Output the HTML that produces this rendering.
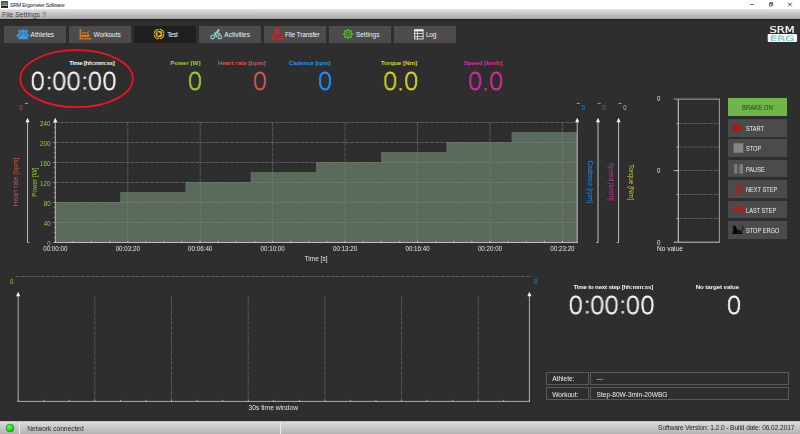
<!DOCTYPE html>
<html lang="en">
<head>
<meta charset="utf-8">
<title>SRM Ergometer Software</title>
<style>
*{box-sizing:border-box;margin:0;padding:0}
html,body{width:800px;height:434px;overflow:hidden;background:#2e2e2e}
body{position:relative;font-family:"Liberation Sans",sans-serif;color:#fff;font-size:6.5px;line-height:1}
.abs{position:absolute}
.t{position:absolute;white-space:nowrap;line-height:1}
.r{text-align:right}
.c{text-align:center}
.b{font-weight:bold}
#titlebar{left:0;top:0;width:800px;height:9px;background:#fff}
#menubar{left:0;top:8.9px;width:800px;height:11.6px;background:linear-gradient(#e6e6e6 0,#d2d2d2 22%,#bebebe 55%,#a9a9a9 89%,#1e1e1e 92%,#202020 100%)}
.tab{position:absolute;top:26px;width:62px;height:16.5px;background:#4c4c4c}
.tab.sel{background:#1f1f1f}
.tab span{position:absolute;top:5.6px;font-size:6.5px;color:#f2f2f2;white-space:nowrap}
.tab svg{position:absolute}
.lbl{font-size:6.2px;font-weight:bold}
.big{font-family:"DejaVu Sans Light","DejaVu Sans",sans-serif;font-weight:200;font-size:25px;transform-origin:100% 50%;transform:scaleX(.99);letter-spacing:-1.35px;-webkit-text-stroke:.8px;will-change:transform}
.big i{font-style:normal;position:relative;top:-1px;left:.6px}
.btn{position:absolute;left:728.2px;width:58.7px;height:17.7px;background:#4b4b4b}
.btn span{position:absolute;left:17.9px;top:7.2px;font-size:6.5px;color:#f0f0f0;white-space:nowrap;transform-origin:0 50%;transform:scaleX(.865)}
.btn svg{position:absolute}
#status{left:0;top:421px;width:800px;height:13px;background:linear-gradient(#a0a0a0 0,#e0e0e0 7%,#d3d3d3 22%,#c4c4c4 60%,#b7b7b7 94%,#a4a4a4 100%);color:#262626}
.box{position:absolute;border:1px solid #5a5a5a;height:12.7px}
.box span{position:absolute;left:5.6px;top:3.5px;font-size:6.6px;color:#eee;white-space:nowrap}
</style>
</head>
<body>
<!-- title bar -->
<div class="abs" id="titlebar">
  <svg class="abs" style="left:.9px;top:1.100px" width="7" height="7" viewBox="0 0 7 7"><rect x="0" y="0" width="7" height="6.800" fill="#4e4e4e"/><rect x=".7" y="1.700" width="5.600" height="1.100" fill="#8a8a8a"/><rect x=".5" y="3.800" width="6" height=".9" fill="#bfeeee"/><rect x="0" y="4.900" width="7" height="1.900" fill="#242424"/></svg>
  <div class="t" style="left:10px;top:2.5px;font-size:5.3px;color:#222;letter-spacing:-.27px">SRM Ergometer Software</div>
  <svg class="abs" style="left:745px;top:0" width="55" height="10" viewBox="0 0 55 10"><g stroke="#222" stroke-width=".6" fill="none"><path d="M5 4.5h4"/><rect x="24.3" y="3.3" width="2.6" height="2.6"/><path d="M25.1 3.3v-.8h2.6v2.6h-.8"/><path d="M43.1 2.6l3.7 3.7M46.8 2.6l-3.7 3.7" stroke-width=".8"/></g></svg>
</div>
<div class="abs" id="menubar">
  <div class="t" style="left:2px;top:3.4px;font-size:6.8px;color:#484848;word-spacing:.5px">File Settings ?</div>
</div>

<!-- tabs -->
<div class="tab" style="left:4px"><svg style="left:11.500px;top:2.800px" width="14" height="11" viewBox="0 0 14 11"><g fill="#4497e2"><ellipse cx="3.900" cy="2.300" rx="1.500" ry="1.900"/><ellipse cx="10.300" cy="2.300" rx="1.500" ry="1.900"/><path d="M.4 7.700c0-1.900.9-2.800 2.500-3.200l.4-.8h1.200l.4.800 1 .3v2.900z"/><path d="M13.300 7.700c0-1.900-.9-2.800-2.500-3.200l-.4-.8H9.200l-.4.800-1 .3v2.900z"/></g><g fill="#4a4a4a"><ellipse cx="7.100" cy="2.500" rx="2.350" ry="2.750"/><path d="M1.800 10.500c0-3.200 1.300-4.600 3.500-5l1-.9h1.600l1 .9c2.200.4 3.500 1.800 3.500 5z"/></g><g fill="#4497e2"><ellipse cx="7.100" cy="2.500" rx="1.900" ry="2.300"/><path d="M2.300 10.200c0-2.800 1.100-3.900 3.100-4.300l.9-1.300h1.600l.9 1.300c2 .4 3.100 1.500 3.100 4.300z"/></g></svg><span style="left:26.600px">Athletes</span></div>
<div class="tab" style="left:69px"><svg style="left:10px;top:2.600px" width="13" height="11" viewBox="0 0 13 11"><g fill="none" stroke="#f0872a"><path d="M1.200.9v8.800h10.200" stroke-width="1.050"/><path d="M2.400 4.500l1.300-1 1.300.9 1.300-.9 1.300.9 1.300-1.300 1.200-.5" stroke-width="1"/></g><circle cx="1.200" cy=".9" r=".8" fill="#f0872a"/><circle cx="11.500" cy="9.700" r=".8" fill="#f0872a"/><path d="M2.400 8.100V6.300l1.300-.9 1.300.8 1.300-.8 1.300.8 1.300-1.100 1.200-.3v3.300z" fill="#f0872a"/><path d="M2.400 7.100h7.700" stroke="#4b4b4b" stroke-width=".4"/></svg><span style="left:24.400px">Workouts</span></div>
<div class="tab sel" style="left:134px"><svg style="left:18.600px;top:1.900px" width="12" height="12" viewBox="0 0 12 12"><circle cx="6" cy="6" r="4.800" fill="none" stroke="#f3bb0b" stroke-width="1.050" stroke-dasharray="6.400 1.140"/><circle cx="6" cy="6" r="3.350" fill="#f3bb0b"/><path d="M4.700 3.900l3.200 2.100-3.200 2.100z" fill="#1e1e1e" stroke="#1e1e1e" stroke-width=".5" stroke-linejoin="round"/></svg><span style="left:33.200px;letter-spacing:-.4px">Test</span></div>
<div class="tab" style="left:199px"><svg style="left:11px;top:2.700px" width="13" height="11" viewBox="0 0 13 11"><g fill="none" stroke="#8fd6d0"><circle cx="2.700" cy="8" r="1.800" stroke-width="1.150"/><circle cx="9.800" cy="8" r="1.800" stroke-width="1.150"/><path d="M6.200 7.700V6.200L4.500 4.900l2.600-2.100 1.100 1.900h1.600" stroke-width="1.500" stroke-linejoin="round" stroke-linecap="round"/></g><circle cx="8.300" cy="1.500" r="1.300" fill="#8fd6d0"/></svg><span style="left:25.300px">Activities</span></div>
<div class="tab" style="left:264px"><svg style="left:6.800px;top:2.200px" width="13" height="12" viewBox="0 0 13 12"><g fill="#e11b1d"><path d="M4.400.2h3.400v4.500h1.800L6.100 8.100 2.600 4.700h1.800z"/><path d="M.3 7h1.500v2.900h8.600V7h1.500v4.400H.3z"/></g></svg><span style="left:21px;letter-spacing:-.115px">File Transfer</span></div>
<div class="tab" style="left:329px"><svg style="left:12.600px;top:1.900px" width="12" height="12" viewBox="0 0 12 12"><polygon fill="#5db92f" points="6.00,0.40 7.42,2.58 9.96,2.04 9.42,4.58 11.60,6.00 9.42,7.42 9.96,9.96 7.42,9.42 6.00,11.60 4.58,9.42 2.04,9.96 2.58,7.42 0.40,6.00 2.58,4.58 2.04,2.04 4.58,2.58"/><circle cx="6" cy="6" r="2.550" fill="none" stroke="#2c5a1c" stroke-width=".85"/><rect x="5.250" y="4.900" width="1.500" height="2.200" rx=".4" fill="none" stroke="#1f4414" stroke-width=".7"/></svg><span style="left:26.900px">Settings</span></div>
<div class="tab" style="left:394px"><svg style="left:19.600px;top:2.500px" width="10" height="11" viewBox="0 0 10 11"><rect x=".2" y=".2" width="9.300" height="10.200" fill="#f4f4f4"/><g fill="#4b4b4b"><rect x="1.100" y="2.300" width="2" height="2"/><rect x="3.800" y="2.300" width="4.800" height="2"/><rect x="1.100" y="5" width="2" height="2"/><rect x="3.800" y="5" width="4.800" height="2"/><rect x="1.100" y="7.700" width="2" height="1.900"/><rect x="3.800" y="7.700" width="4.800" height="1.900"/></g></svg><span style="left:31.900px;letter-spacing:-.19px">Log</span></div>

<!-- logo -->
<svg class="abs" style="left:764px;top:23px;will-change:transform" width="36" height="22" viewBox="0 0 36 22" font-family="DejaVu Sans, Liberation Sans, sans-serif" font-weight="normal">
  <text x="5.400" y="9.700" font-size="8.700" fill="#f4f4f4" stroke="#f4f4f4" stroke-width=".2" textLength="25.400" lengthAdjust="spacingAndGlyphs">SRM</text>
  <rect x="3.700" y="11.100" width="29.400" height="7.800" rx="1.200" fill="#f6f6f6"/>
  <text x="6" y="18" font-size="7.400" fill="#7cc6c6" stroke="#7cc6c6" stroke-width=".2" textLength="24.200" lengthAdjust="spacingAndGlyphs">ERG</text>
</svg>

<!-- readouts -->
<div class="t lbl r" style="right:685.5px;top:60px;color:#f4f4f4;letter-spacing:-.3px">Time [hh:mm:ss]</div>
<div class="t big r" style="right:684.45px;top:69.3px;color:#f4f4f4">0<i>:</i>00<i>:</i>00</div>
<div class="t lbl r" style="right:599.5px;top:60px;color:#9acd32">Power [W]</div>
<div class="t big r" style="right:598.5px;top:69.3px;color:#9acd32">0</div>
<div class="t lbl r" style="right:534.5px;top:60px;color:#d9534f">Heart rate [bpm]</div>
<div class="t big r" style="right:533.5px;top:69.3px;color:#d9534f">0</div>
<div class="t lbl r" style="right:469.5px;top:60px;color:#1e90ff;letter-spacing:-.14px">Cadence [rpm]</div>
<div class="t big r" style="right:468.5px;top:69.3px;color:#1e90ff">0</div>
<div class="t lbl r" style="right:383px;top:60px;color:#d6d223">Torque [Nm]</div>
<div class="t big r" style="right:382.6px;top:69.3px;color:#d6d223">0.0</div>
<div class="t lbl r" style="right:297.5px;top:60px;color:#dc2aa2">Speed [km/h]</div>
<div class="t big r" style="right:297.1px;top:69.3px;color:#dc2aa2">0.0</div>

<!-- main svg overlay: charts, ellipse -->
<svg class="abs" style="left:0;top:0" width="800" height="434" viewBox="0 0 800 434" font-family="Liberation Sans, sans-serif">
  <ellipse cx="76.600" cy="78.700" rx="56.200" ry="28.500" fill="none" stroke="#f01420" stroke-width="1.800"/>
  <polygon points="55.3,242.5 55.3,202.5 120.54,202.5 120.54,192.5 185.78,192.5 185.78,182.5 251.01,182.5 251.01,172.5 316.25,172.5 316.25,162.5 381.49,162.5 381.49,152.5 446.73,152.5 446.73,142.5 511.96,142.5 511.96,132.5 577.2,132.5 577.2,242.5" fill="#5a6b5b"/>
  <polyline points="55.3,202.5 120.54,202.5 120.54,192.5 185.78,192.5 185.78,182.5 251.01,182.5 251.01,172.5 316.25,172.5 316.25,162.5 381.49,162.5 381.49,152.5 446.73,152.5 446.73,142.5 511.96,142.5 511.96,132.5 577.2,132.5" fill="none" stroke="#6f846f" stroke-width=".5"/>
  <line x1="55.3" x2="577.2" y1="222.5" y2="222.5" stroke="#848484" stroke-width=".5" stroke-dasharray="4 1"/>
  <line x1="55.3" x2="577.2" y1="202.5" y2="202.5" stroke="#848484" stroke-width=".5" stroke-dasharray="4 1"/>
  <line x1="55.3" x2="577.2" y1="182.5" y2="182.5" stroke="#848484" stroke-width=".5" stroke-dasharray="4 1"/>
  <line x1="55.3" x2="577.2" y1="162.5" y2="162.5" stroke="#848484" stroke-width=".5" stroke-dasharray="4 1"/>
  <line x1="55.3" x2="577.2" y1="142.5" y2="142.5" stroke="#848484" stroke-width=".5" stroke-dasharray="4 1"/>
  <line x1="55.3" x2="577.2" y1="122.5" y2="122.5" stroke="#848484" stroke-width=".5" stroke-dasharray="4 1"/>
  <line x1="127.75" x2="127.75" y1="122.5" y2="242.5" stroke="#848484" stroke-width=".5" stroke-dasharray="4 1"/>
  <line x1="200.2" x2="200.2" y1="122.5" y2="242.5" stroke="#848484" stroke-width=".5" stroke-dasharray="4 1"/>
  <line x1="272.65" x2="272.65" y1="122.5" y2="242.5" stroke="#848484" stroke-width=".5" stroke-dasharray="4 1"/>
  <line x1="345.1" x2="345.1" y1="122.5" y2="242.5" stroke="#848484" stroke-width=".5" stroke-dasharray="4 1"/>
  <line x1="417.55" x2="417.55" y1="122.5" y2="242.5" stroke="#848484" stroke-width=".5" stroke-dasharray="4 1"/>
  <line x1="490" x2="490" y1="122.5" y2="242.5" stroke="#848484" stroke-width=".5" stroke-dasharray="4 1"/>
  <line x1="562.45" x2="562.45" y1="122.5" y2="242.5" stroke="#848484" stroke-width=".5" stroke-dasharray="4 1"/>
  <line x1="27.55" x2="27.55" y1="120.8" y2="242.5" stroke="#bcbcbc" stroke-width="1"/><polygon points="27.55,117.8 25.45,122.3 29.65,122.3" fill="#f4f4f4"/><line x1="27.55" x2="29.35" y1="242.5" y2="242.5" stroke="#bcbcbc" stroke-width="1"/>
  <line x1="55.3" x2="55.3" y1="120.8" y2="242.5" stroke="#bcbcbc" stroke-width="1"/><polygon points="55.3,117.8 53.2,122.3 57.4,122.3" fill="#f4f4f4"/>
  <line x1="577.2" x2="577.2" y1="120.8" y2="242.5" stroke="#bcbcbc" stroke-width="1"/><polygon points="577.2,117.8 575.1,122.3 579.3,122.3" fill="#f4f4f4"/><line x1="577.2" x2="575.4" y1="242.5" y2="242.5" stroke="#bcbcbc" stroke-width="1"/>
  <line x1="598" x2="598" y1="120.8" y2="242.5" stroke="#bcbcbc" stroke-width="1"/><polygon points="598,117.8 595.9,122.3 600.1,122.3" fill="#f4f4f4"/><line x1="598" x2="596.2" y1="242.5" y2="242.5" stroke="#bcbcbc" stroke-width="1"/>
  <line x1="618.6" x2="618.6" y1="120.8" y2="242.5" stroke="#bcbcbc" stroke-width="1"/><polygon points="618.6,117.8 616.5,122.3 620.7,122.3" fill="#f4f4f4"/><line x1="618.6" x2="616.8" y1="242.5" y2="242.5" stroke="#bcbcbc" stroke-width="1"/>
  <line x1="54.8" x2="577.7" y1="242.5" y2="242.5" stroke="#bcbcbc" stroke-width="1"/>
  <line x1="52.7" x2="55.3" y1="242.5" y2="242.5" stroke="#bcbcbc" stroke-width=".6"/>
  <line x1="53.8" x2="55.3" y1="237.5" y2="237.5" stroke="#bcbcbc" stroke-width=".6"/>
  <line x1="53.8" x2="55.3" y1="232.5" y2="232.5" stroke="#bcbcbc" stroke-width=".6"/>
  <line x1="53.8" x2="55.3" y1="227.5" y2="227.5" stroke="#bcbcbc" stroke-width=".6"/>
  <line x1="52.7" x2="55.3" y1="222.5" y2="222.5" stroke="#bcbcbc" stroke-width=".6"/>
  <line x1="53.8" x2="55.3" y1="217.5" y2="217.5" stroke="#bcbcbc" stroke-width=".6"/>
  <line x1="53.8" x2="55.3" y1="212.5" y2="212.5" stroke="#bcbcbc" stroke-width=".6"/>
  <line x1="53.8" x2="55.3" y1="207.5" y2="207.5" stroke="#bcbcbc" stroke-width=".6"/>
  <line x1="52.7" x2="55.3" y1="202.5" y2="202.5" stroke="#bcbcbc" stroke-width=".6"/>
  <line x1="53.8" x2="55.3" y1="197.5" y2="197.5" stroke="#bcbcbc" stroke-width=".6"/>
  <line x1="53.8" x2="55.3" y1="192.5" y2="192.5" stroke="#bcbcbc" stroke-width=".6"/>
  <line x1="53.8" x2="55.3" y1="187.5" y2="187.5" stroke="#bcbcbc" stroke-width=".6"/>
  <line x1="52.7" x2="55.3" y1="182.5" y2="182.5" stroke="#bcbcbc" stroke-width=".6"/>
  <line x1="53.8" x2="55.3" y1="177.5" y2="177.5" stroke="#bcbcbc" stroke-width=".6"/>
  <line x1="53.8" x2="55.3" y1="172.5" y2="172.5" stroke="#bcbcbc" stroke-width=".6"/>
  <line x1="53.8" x2="55.3" y1="167.5" y2="167.5" stroke="#bcbcbc" stroke-width=".6"/>
  <line x1="52.7" x2="55.3" y1="162.5" y2="162.5" stroke="#bcbcbc" stroke-width=".6"/>
  <line x1="53.8" x2="55.3" y1="157.5" y2="157.5" stroke="#bcbcbc" stroke-width=".6"/>
  <line x1="53.8" x2="55.3" y1="152.5" y2="152.5" stroke="#bcbcbc" stroke-width=".6"/>
  <line x1="53.8" x2="55.3" y1="147.5" y2="147.5" stroke="#bcbcbc" stroke-width=".6"/>
  <line x1="52.7" x2="55.3" y1="142.5" y2="142.5" stroke="#bcbcbc" stroke-width=".6"/>
  <line x1="53.8" x2="55.3" y1="137.5" y2="137.5" stroke="#bcbcbc" stroke-width=".6"/>
  <line x1="53.8" x2="55.3" y1="132.5" y2="132.5" stroke="#bcbcbc" stroke-width=".6"/>
  <line x1="53.8" x2="55.3" y1="127.5" y2="127.5" stroke="#bcbcbc" stroke-width=".6"/>
  <line x1="52.7" x2="55.3" y1="122.5" y2="122.5" stroke="#bcbcbc" stroke-width=".6"/>
  <line x1="55.3" x2="55.3" y1="240.9" y2="242.5" stroke="#f0f0f0" stroke-width=".6"/>
  <line x1="73.41" x2="73.41" y1="240.9" y2="242.5" stroke="#f0f0f0" stroke-width=".6"/>
  <line x1="91.53" x2="91.53" y1="240.9" y2="242.5" stroke="#f0f0f0" stroke-width=".6"/>
  <line x1="109.64" x2="109.64" y1="240.9" y2="242.5" stroke="#f0f0f0" stroke-width=".6"/>
  <line x1="127.75" x2="127.75" y1="240.9" y2="242.5" stroke="#f0f0f0" stroke-width=".6"/>
  <line x1="145.86" x2="145.86" y1="240.9" y2="242.5" stroke="#f0f0f0" stroke-width=".6"/>
  <line x1="163.98" x2="163.98" y1="240.9" y2="242.5" stroke="#f0f0f0" stroke-width=".6"/>
  <line x1="182.09" x2="182.09" y1="240.9" y2="242.5" stroke="#f0f0f0" stroke-width=".6"/>
  <line x1="200.2" x2="200.2" y1="240.9" y2="242.5" stroke="#f0f0f0" stroke-width=".6"/>
  <line x1="218.31" x2="218.31" y1="240.9" y2="242.5" stroke="#f0f0f0" stroke-width=".6"/>
  <line x1="236.43" x2="236.43" y1="240.9" y2="242.5" stroke="#f0f0f0" stroke-width=".6"/>
  <line x1="254.54" x2="254.54" y1="240.9" y2="242.5" stroke="#f0f0f0" stroke-width=".6"/>
  <line x1="272.65" x2="272.65" y1="240.9" y2="242.5" stroke="#f0f0f0" stroke-width=".6"/>
  <line x1="290.76" x2="290.76" y1="240.9" y2="242.5" stroke="#f0f0f0" stroke-width=".6"/>
  <line x1="308.88" x2="308.88" y1="240.9" y2="242.5" stroke="#f0f0f0" stroke-width=".6"/>
  <line x1="326.99" x2="326.99" y1="240.9" y2="242.5" stroke="#f0f0f0" stroke-width=".6"/>
  <line x1="345.1" x2="345.1" y1="240.9" y2="242.5" stroke="#f0f0f0" stroke-width=".6"/>
  <line x1="363.21" x2="363.21" y1="240.9" y2="242.5" stroke="#f0f0f0" stroke-width=".6"/>
  <line x1="381.33" x2="381.33" y1="240.9" y2="242.5" stroke="#f0f0f0" stroke-width=".6"/>
  <line x1="399.44" x2="399.44" y1="240.9" y2="242.5" stroke="#f0f0f0" stroke-width=".6"/>
  <line x1="417.55" x2="417.55" y1="240.9" y2="242.5" stroke="#f0f0f0" stroke-width=".6"/>
  <line x1="435.66" x2="435.66" y1="240.9" y2="242.5" stroke="#f0f0f0" stroke-width=".6"/>
  <line x1="453.78" x2="453.78" y1="240.9" y2="242.5" stroke="#f0f0f0" stroke-width=".6"/>
  <line x1="471.89" x2="471.89" y1="240.9" y2="242.5" stroke="#f0f0f0" stroke-width=".6"/>
  <line x1="490" x2="490" y1="240.9" y2="242.5" stroke="#f0f0f0" stroke-width=".6"/>
  <line x1="508.11" x2="508.11" y1="240.9" y2="242.5" stroke="#f0f0f0" stroke-width=".6"/>
  <line x1="526.23" x2="526.23" y1="240.9" y2="242.5" stroke="#f0f0f0" stroke-width=".6"/>
  <line x1="544.34" x2="544.34" y1="240.9" y2="242.5" stroke="#f0f0f0" stroke-width=".6"/>
  <line x1="562.45" x2="562.45" y1="240.9" y2="242.5" stroke="#f0f0f0" stroke-width=".6"/>
  <text x="47.3" y="245.6" font-size="7" fill="#9acd32" textLength="3.3" lengthAdjust="spacingAndGlyphs">0</text>
  <text x="43.7" y="225.6" font-size="7" fill="#9acd32" textLength="6.9" lengthAdjust="spacingAndGlyphs">40</text>
  <text x="43.7" y="205.6" font-size="7" fill="#9acd32" textLength="6.9" lengthAdjust="spacingAndGlyphs">80</text>
  <text x="40.1" y="185.6" font-size="7" fill="#9acd32" textLength="10.5" lengthAdjust="spacingAndGlyphs">120</text>
  <text x="40.1" y="165.6" font-size="7" fill="#9acd32" textLength="10.5" lengthAdjust="spacingAndGlyphs">160</text>
  <text x="40.1" y="145.6" font-size="7" fill="#9acd32" textLength="10.5" lengthAdjust="spacingAndGlyphs">200</text>
  <text x="40.1" y="125.6" font-size="7" fill="#9acd32" textLength="10.5" lengthAdjust="spacingAndGlyphs">240</text>
  <text x="43.2" y="251" font-size="6.6" fill="#e4e4e4" textLength="24.2" lengthAdjust="spacingAndGlyphs">00:00:00</text>
  <text x="115.65" y="251" font-size="6.6" fill="#e4e4e4" textLength="24.2" lengthAdjust="spacingAndGlyphs">00:03:20</text>
  <text x="188.1" y="251" font-size="6.6" fill="#e4e4e4" textLength="24.2" lengthAdjust="spacingAndGlyphs">00:06:40</text>
  <text x="260.55" y="251" font-size="6.6" fill="#e4e4e4" textLength="24.2" lengthAdjust="spacingAndGlyphs">00:10:00</text>
  <text x="333" y="251" font-size="6.6" fill="#e4e4e4" textLength="24.2" lengthAdjust="spacingAndGlyphs">00:13:20</text>
  <text x="405.45" y="251" font-size="6.6" fill="#e4e4e4" textLength="24.2" lengthAdjust="spacingAndGlyphs">00:16:40</text>
  <text x="477.9" y="251" font-size="6.6" fill="#e4e4e4" textLength="24.2" lengthAdjust="spacingAndGlyphs">00:20:00</text>
  <text x="550.35" y="251" font-size="6.6" fill="#e4e4e4" textLength="24.2" lengthAdjust="spacingAndGlyphs">00:23:20</text>
  <text x="316" y="261.2" text-anchor="middle" font-size="6.5" fill="#e4e4e4">Time [s]</text>
  <text transform="translate(17.6,182.1) rotate(-90)" x="-24.15" font-size="6.6" fill="#c9504c" textLength="48.3" lengthAdjust="spacingAndGlyphs">Heart rate [bpm]</text>
  <text transform="translate(37,182.2) rotate(-90)" x="-14.6" font-size="6.6" fill="#9acd32" textLength="29.2" lengthAdjust="spacingAndGlyphs">Power [W]</text>
  <text transform="translate(587.6,181.8) rotate(90)" x="-21.2" font-size="6.6" fill="#1e90ff" textLength="42.4" lengthAdjust="spacingAndGlyphs">Cadence [rpm]</text>
  <text transform="translate(608.6,181.65) rotate(90)" x="-19.15" font-size="6.6" fill="#dc2aa2" textLength="38.3" lengthAdjust="spacingAndGlyphs">Speed [km/h]</text>
  <text transform="translate(629.3,182.15) rotate(90)" x="-18.15" font-size="6.6" fill="#d6d223" textLength="36.3" lengthAdjust="spacingAndGlyphs">Torque [Nm]</text>
  <text x="21.05" y="109.7" text-anchor="middle" font-size="6.7" fill="#c9504c" textLength="3.3" lengthAdjust="spacingAndGlyphs">0</text>
  <line x1="24.9" x2="27.9" y1="103.4" y2="103.4" stroke="#cfcfcf" stroke-width=".7"/>
  <text x="583.5" y="109.9" text-anchor="middle" font-size="6.7" fill="#1e90ff" textLength="3.3" lengthAdjust="spacingAndGlyphs">0</text>
  <line x1="576.8" x2="579.8" y1="103.4" y2="103.4" stroke="#cfcfcf" stroke-width=".7"/>
  <text x="604.2" y="109.9" text-anchor="middle" font-size="6.7" fill="#dc2aa2" textLength="3.3" lengthAdjust="spacingAndGlyphs">0</text>
  <line x1="597.7" x2="600.7" y1="103.4" y2="103.4" stroke="#cfcfcf" stroke-width=".7"/>
  <text x="624.8" y="109.9" text-anchor="middle" font-size="6.7" fill="#d6d223" textLength="3.3" lengthAdjust="spacingAndGlyphs">0</text>
  <line x1="618.3" x2="621.3" y1="103.4" y2="103.4" stroke="#cfcfcf" stroke-width=".7"/>
  <line x1="15.8" x2="531.8" y1="276.5" y2="276.5" stroke="#848484" stroke-width=".5" stroke-dasharray="4 1"/>
  <line x1="94.83" x2="94.83" y1="296.2" y2="401.4" stroke="#848484" stroke-width=".5" stroke-dasharray="4 1"/>
  <line x1="171.51" x2="171.51" y1="296.2" y2="401.4" stroke="#848484" stroke-width=".5" stroke-dasharray="4 1"/>
  <line x1="248.19" x2="248.19" y1="296.2" y2="401.4" stroke="#848484" stroke-width=".5" stroke-dasharray="4 1"/>
  <line x1="324.87" x2="324.87" y1="296.2" y2="401.4" stroke="#848484" stroke-width=".5" stroke-dasharray="4 1"/>
  <line x1="401.55" x2="401.55" y1="296.2" y2="401.4" stroke="#848484" stroke-width=".5" stroke-dasharray="4 1"/>
  <line x1="478.23" x2="478.23" y1="296.2" y2="401.4" stroke="#848484" stroke-width=".5" stroke-dasharray="4 1"/>
  <line x1="18.15" x2="18.15" y1="294.7" y2="401.4" stroke="#adadad" stroke-width="1"/><polygon points="18.15,291.7 16.05,296.2 20.25,296.2" fill="#f4f4f4"/>
  <line x1="529.4" x2="529.4" y1="294.7" y2="401.4" stroke="#adadad" stroke-width="1"/><polygon points="529.4,291.7 527.3,296.2 531.5,296.2" fill="#f4f4f4"/>
  <line x1="17.65" x2="529.9" y1="401.4" y2="401.4" stroke="#adadad" stroke-width="1"/>
  <line x1="18.15" x2="18.15" y1="399.8" y2="401.4" stroke="#f0f0f0" stroke-width=".6"/>
  <line x1="43.71" x2="43.71" y1="399.8" y2="401.4" stroke="#f0f0f0" stroke-width=".6"/>
  <line x1="69.27" x2="69.27" y1="399.8" y2="401.4" stroke="#f0f0f0" stroke-width=".6"/>
  <line x1="94.83" x2="94.83" y1="399.8" y2="401.4" stroke="#f0f0f0" stroke-width=".6"/>
  <line x1="120.39" x2="120.39" y1="399.8" y2="401.4" stroke="#f0f0f0" stroke-width=".6"/>
  <line x1="145.95" x2="145.95" y1="399.8" y2="401.4" stroke="#f0f0f0" stroke-width=".6"/>
  <line x1="171.51" x2="171.51" y1="399.8" y2="401.4" stroke="#f0f0f0" stroke-width=".6"/>
  <line x1="197.07" x2="197.07" y1="399.8" y2="401.4" stroke="#f0f0f0" stroke-width=".6"/>
  <line x1="222.63" x2="222.63" y1="399.8" y2="401.4" stroke="#f0f0f0" stroke-width=".6"/>
  <line x1="248.19" x2="248.19" y1="399.8" y2="401.4" stroke="#f0f0f0" stroke-width=".6"/>
  <line x1="273.75" x2="273.75" y1="399.8" y2="401.4" stroke="#f0f0f0" stroke-width=".6"/>
  <line x1="299.31" x2="299.31" y1="399.8" y2="401.4" stroke="#f0f0f0" stroke-width=".6"/>
  <line x1="324.87" x2="324.87" y1="399.8" y2="401.4" stroke="#f0f0f0" stroke-width=".6"/>
  <line x1="350.43" x2="350.43" y1="399.8" y2="401.4" stroke="#f0f0f0" stroke-width=".6"/>
  <line x1="375.99" x2="375.99" y1="399.8" y2="401.4" stroke="#f0f0f0" stroke-width=".6"/>
  <line x1="401.55" x2="401.55" y1="399.8" y2="401.4" stroke="#f0f0f0" stroke-width=".6"/>
  <line x1="427.11" x2="427.11" y1="399.8" y2="401.4" stroke="#f0f0f0" stroke-width=".6"/>
  <line x1="452.67" x2="452.67" y1="399.8" y2="401.4" stroke="#f0f0f0" stroke-width=".6"/>
  <line x1="478.23" x2="478.23" y1="399.8" y2="401.4" stroke="#f0f0f0" stroke-width=".6"/>
  <line x1="503.79" x2="503.79" y1="399.8" y2="401.4" stroke="#f0f0f0" stroke-width=".6"/>
  <line x1="529.35" x2="529.35" y1="399.8" y2="401.4" stroke="#f0f0f0" stroke-width=".6"/>
  <text x="11.6" y="283.5" text-anchor="middle" font-size="6.7" fill="#9acd32" textLength="3.3" lengthAdjust="spacingAndGlyphs">0</text>
  <text x="535.9" y="283.5" text-anchor="middle" font-size="6.7" fill="#1e90ff" textLength="3.3" lengthAdjust="spacingAndGlyphs">0</text>
  <text x="248.5" y="409.7" font-size="6.7" fill="#e4e4e4" textLength="49.6" lengthAdjust="spacingAndGlyphs">30s time window</text>
  <line x1="678.3" x2="719.4" y1="123.5" y2="123.5" stroke="#848484" stroke-width=".5" stroke-dasharray="4 1"/>
  <line x1="676.3" x2="678.3" y1="123.5" y2="123.5" stroke="#cfcfcf" stroke-width=".7"/>
  <line x1="678.3" x2="719.4" y1="147" y2="147" stroke="#848484" stroke-width=".5" stroke-dasharray="4 1"/>
  <line x1="676.3" x2="678.3" y1="147" y2="147" stroke="#cfcfcf" stroke-width=".7"/>
  <line x1="678.3" x2="719.4" y1="170.5" y2="170.5" stroke="#848484" stroke-width=".5" stroke-dasharray="4 1"/>
  <line x1="676.3" x2="678.3" y1="170.5" y2="170.5" stroke="#cfcfcf" stroke-width=".7"/>
  <line x1="678.3" x2="719.4" y1="194.5" y2="194.5" stroke="#848484" stroke-width=".5" stroke-dasharray="4 1"/>
  <line x1="676.3" x2="678.3" y1="194.5" y2="194.5" stroke="#cfcfcf" stroke-width=".7"/>
  <line x1="678.3" x2="719.4" y1="218.5" y2="218.5" stroke="#848484" stroke-width=".5" stroke-dasharray="4 1"/>
  <line x1="676.3" x2="678.3" y1="218.5" y2="218.5" stroke="#cfcfcf" stroke-width=".7"/>
  <line x1="673.7" x2="719.8" y1="99.2" y2="99.2" stroke="#8c8c8c" stroke-width="1.3"/>
  <line x1="673.7" x2="719.8" y1="242.2" y2="242.2" stroke="#c4c4c4" stroke-width="1"/>
  <line x1="678.3" x2="678.3" y1="99.2" y2="242.2" stroke="#c4c4c4" stroke-width="1.1"/>
  <line x1="719.4" x2="719.4" y1="99.2" y2="242.2" stroke="#bdbdbd" stroke-width=".8"/>
  <line x1="673.7" x2="678.3" y1="170.7" y2="170.7" stroke="#c4c4c4" stroke-width=".9"/>
  <text x="657.1" y="100.8" font-size="6.6" fill="#e4e4e4" textLength="3.4" lengthAdjust="spacingAndGlyphs">0</text>
  <text x="657.1" y="172.7" font-size="6.6" fill="#e4e4e4" textLength="3.4" lengthAdjust="spacingAndGlyphs">0</text>
  <text x="657.1" y="244.5" font-size="6.6" fill="#e4e4e4" textLength="3.4" lengthAdjust="spacingAndGlyphs">0</text>
  <text x="657" y="251" font-size="6.5" fill="#e4e4e4" textLength="25.8" lengthAdjust="spacingAndGlyphs">No value</text>
</svg>

<!-- buttons -->
<div class="btn" style="top:98.200px;background:#6fb548"><span style="left:0;top:6.5px;width:100%;text-align:center;color:#23401a;transform-origin:50% 50%;transform:scaleX(.92)">BRAKE ON</span></div>
<div class="btn" style="top:118.900px"><svg style="left:4.500px;top:3.800px" width="11" height="10" viewBox="0 0 11 10"><path d="M.5 0l9.900 4.800L.5 9.600z" fill="#c1100e"/></svg><span>START</span></div>
<div class="btn" style="top:139.200px"><svg style="left:4.500px;top:3.800px" width="11" height="10" viewBox="0 0 11 10"><rect x=".5" y=".3" width="9.800" height="9.400" fill="#868686"/></svg><span>STOP</span></div>
<div class="btn" style="top:159.800px"><svg style="left:4.500px;top:3.900px" width="11" height="10" viewBox="0 0 11 10"><rect x="1.100" y=".3" width="3.200" height="9.300" fill="#7c7c7c"/><rect x="6.300" y=".3" width="3.700" height="9.300" fill="#7c7c7c"/></svg><span>PAUSE</span></div>
<div class="btn" style="top:180.200px"><svg style="left:4.500px;top:3.500px" width="11" height="10" viewBox="0 0 11 10"><path d="M2 .4h2L7.700 5 4 9.700H2L5.200 5z" fill="#d0100f"/><rect x="7.900" y=".3" width="1.500" height="9.500" fill="#d0100f"/></svg><span>NEXT STEP</span></div>
<div class="btn" style="top:200.800px"><svg style="left:4.500px;top:4.500px" width="11" height="8" viewBox="0 0 11 8"><path d="M.6.400l3.800 3.500L.6 7.400zM4.400.4l3.800 3.500-3.800 3.500z" fill="#d0100f"/><rect x="8.300" y=".2" width="1.700" height="7.400" fill="#d0100f"/></svg><span>LAST STEP</span></div>
<div class="btn" style="top:221.100px"><svg style="left:3.800px;top:3.800px" width="13" height="10" viewBox="0 0 13 10"><g fill="#080808" stroke="#080808"><path d="M.6 1.300h3.300" stroke-width="1"/><path d="M1.400 1.700h1.900l2.200 3.400 2 .2 2.400 3.200H1z" stroke-width=".5"/><path d="M10.700 3.800L8.400 8" fill="none" stroke-width="1"/><path d="M9.300.35h1.800" stroke-width=".6" fill="none"/><path d="M10 2.900h1.900" stroke-width="1" fill="none"/><path d="M0 8.500h10.400" stroke-width=".9"/></g><path d="M5.600 6.300l1.500 1.500H5.300z" fill="#4b4b4b"/></svg><span>STOP ERGO</span></div>

<!-- bottom right -->
<div class="t lbl r" style="right:147px;top:284px;color:#f4f4f4;letter-spacing:-.235px">Time to next step [hh:mm:ss]</div>
<div class="t big r" style="right:145.75px;top:293.1px;color:#f4f4f4">0<i>:</i>00<i>:</i>00</div>
<div class="t lbl r" style="right:61px;top:284px;color:#f4f4f4;letter-spacing:-.09px">No target value</div>
<div class="t big r" style="right:59.6px;top:293.1px;color:#f4f4f4">0</div>

<div class="box" style="left:545.6px;top:371.9px;width:43.3px"><span>Athlete:</span></div>
<div class="box" style="left:589.9px;top:371.9px;width:199.5px"><span>---</span></div>
<div class="box" style="left:545.6px;top:387px;width:43.3px"><span>Workout:</span></div>
<div class="box" style="left:589.9px;top:387px;width:199.5px"><span>Step-80W-3min-20WBG</span></div>

<!-- status bar -->
<div class="abs" id="status">
  <svg class="abs" style="left:5px;top:1.800px" width="10" height="10" viewBox="0 0 10 10"><defs><radialGradient id="led" cx=".4" cy=".35" r=".7"><stop offset="0" stop-color="#6dff5a"/><stop offset=".55" stop-color="#1fe01f"/><stop offset="1" stop-color="#12a517"/></radialGradient></defs><circle cx="5" cy="5" r="4" fill="url(#led)" stroke="#3c6b3c" stroke-width=".5"/></svg>
  <div class="abs" style="left:18.8px;top:1.3px;width:1px;height:11.7px;background:#ececec"></div>
  <div class="abs" style="left:279.8px;top:1.3px;width:1px;height:11.7px;background:#ececec"></div>
  <div class="t" style="left:27.2px;top:5px;font-size:6.6px">Network connected</div>
  <div class="t r" style="right:5.6px;top:3.9px;font-size:6.6px;letter-spacing:-.078px">Software Version: 1.2.0 - Build date: 06.02.2017</div>
</div>
</body>
</html>
